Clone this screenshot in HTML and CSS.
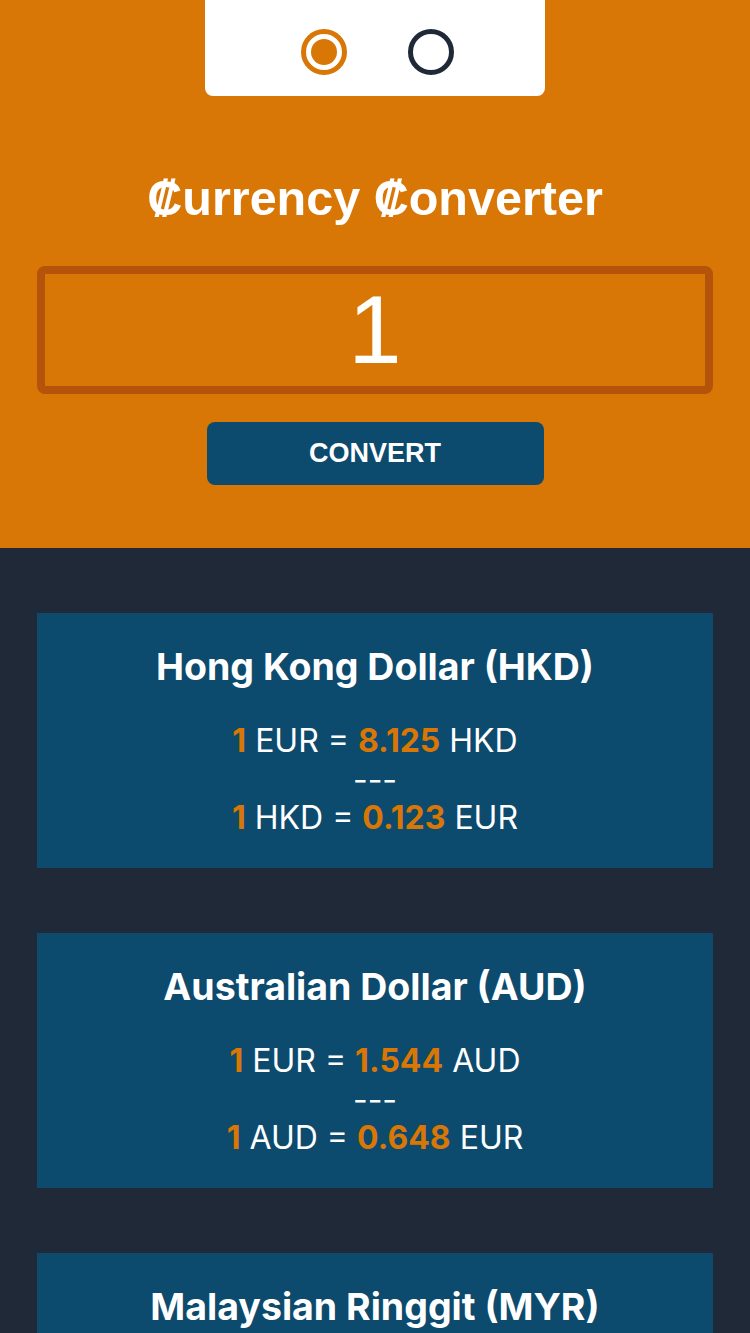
FILE: index.html
```html
<!DOCTYPE html>
<html>
<head>
<meta charset="utf-8">
<link rel="stylesheet" href="styles.css">
</head>
<body>
<header class="top">
  <div class="tabs">
    <span class="radio radio-on"><span class="dot"></span></span>
    <span class="radio radio-off"></span>
  </div>
  <h1 class="title">₡urrency ₡onverter</h1>
  <div class="amount">1</div>
  <button class="convert">CONVERT</button>
</header>
<main class="list">
  <section class="card">
    <h2 class="card-title">Hong Kong Dollar (HKD)</h2>
    <p class="rate"><b>1</b> EUR = <b>8.125</b> HKD</p>
    <p class="rate">---</p>
    <p class="rate"><b>1</b> HKD = <b>0.123</b> EUR</p>
  </section>
  <section class="card">
    <h2 class="card-title">Australian Dollar (AUD)</h2>
    <p class="rate"><b>1</b> EUR = <b>1.544</b> AUD</p>
    <p class="rate">---</p>
    <p class="rate"><b>1</b> AUD = <b>0.648</b> EUR</p>
  </section>
  <section class="card">
    <h2 class="card-title">Malaysian Ringgit (MYR)</h2>
    <p class="rate"><b>1</b> EUR = <b>0.000</b> MYR</p>
    <p class="rate">---</p>
    <p class="rate"><b>1</b> MYR = <b>0.000</b> EUR</p>
  </section>
</main>
</body>
</html>
```
FILE: styles.css
```css
* { box-sizing: border-box; }
html, body { margin: 0; padding: 0; }
body {
  background: #1f2937;
  font-family: "Liberation Sans", Arial, sans-serif;
  color: #fff;
}
.top {
  background: #d97706;
  display: flex;
  flex-direction: column;
  align-items: center;
  padding: 0 37px 63px;
}
.tabs {
  width: 340px;
  height: 96px;
  padding: 8px 0 0 5px;
  background: #fff;
  border-radius: 0 0 8px 8px;
  display: flex;
  justify-content: center;
  align-items: center;
  gap: 61px;
}
.radio {
  width: 46px;
  height: 46px;
  border-radius: 50%;
  border: 5px solid #d97706;
  display: flex;
  align-items: center;
  justify-content: center;
}
.radio-off { border-color: #1f2937; }
.dot {
  width: 26px;
  height: 26px;
  border-radius: 50%;
  background: #d97706;
}
.title {
  margin: 74px 0 0;
  font-size: 48.5px;
  line-height: 56px;
  font-weight: bold;
}
.amount {
  margin-top: 40px;
  width: 100%;
  height: 128px;
  border: 8px solid #b45309;
  border-radius: 8px;
  font-size: 96px;
  line-height: 112px;
  text-align: center;
}
.convert {
  margin-top: 28px;
  width: 337px;
  height: 63px;
  border: none;
  border-radius: 8px;
  background: #0c4a6e;
  color: #fff;
  font-family: "Liberation Sans", Arial, sans-serif;
  font-weight: bold;
  font-size: 27px;
}
.list {
  padding: 65px 37px;
  display: flex;
  flex-direction: column;
  gap: 65px;
}
.card {
  background: #0c4a6e;
  padding: 30px 20px 30.5px;
  text-align: center;
  font-family: Inter, "Liberation Sans", sans-serif;
}
.card-title {
  margin: 0 0 31px;
  font-size: 37.5px;
  line-height: 48px;
  font-weight: 700;
}
.rate {
  margin: 0;
  font-size: 32px;
  line-height: 38.5px;
}
.rate b { color: #d97706; font-weight: 700; }
```
